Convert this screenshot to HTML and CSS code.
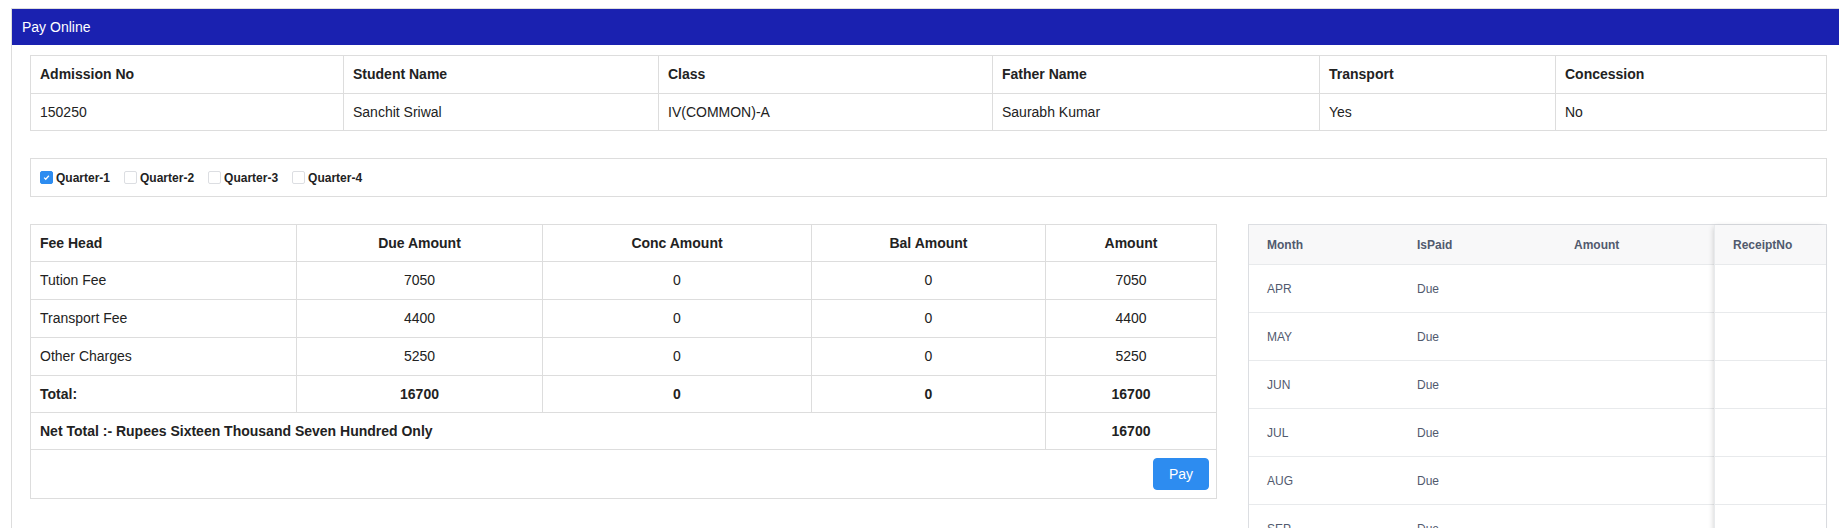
FILE: index.html
```html
<!DOCTYPE html>
<html lang="en">
<head>
<meta charset="utf-8">
<title>Pay Online</title>
<link rel="stylesheet" href="styles.css">
</head>
<body>
<div class="panel">
  <div class="panel-heading">Pay Online</div>
  <div class="panel-body">
    <table class="grid info">
      <colgroup>
        <col class="c313"><col class="c315"><col class="c334"><col class="c327"><col class="c236"><col>
      </colgroup>
      <thead>
        <tr><th>Admission No</th><th>Student Name</th><th>Class</th><th>Father Name</th><th>Transport</th><th>Concession</th></tr>
      </thead>
      <tbody>
        <tr><td>150250</td><td>Sanchit Sriwal</td><td>IV(COMMON)-A</td><td>Saurabh Kumar</td><td>Yes</td><td>No</td></tr>
      </tbody>
    </table>

    <div class="quarters">
      <label class="chk"><span class="box checked"><svg viewBox="0 0 14 14" width="13" height="13"><polyline points="4,7.2 6,9.2 10,4.8" fill="none" stroke="#fff" stroke-width="1.6"/></svg></span><span class="lbl">Quarter-1</span></label>
      <label class="chk"><span class="box"></span><span class="lbl">Quarter-2</span></label>
      <label class="chk"><span class="box"></span><span class="lbl">Quarter-3</span></label>
      <label class="chk"><span class="box"></span><span class="lbl">Quarter-4</span></label>
    </div>

    <div class="split">
      <table class="grid fees">
        <colgroup>
          <col class="f266"><col class="f246"><col class="f269"><col class="f234"><col>
        </colgroup>
        <thead>
          <tr><th class="l">Fee Head</th><th>Due Amount</th><th>Conc Amount</th><th>Bal Amount</th><th>Amount</th></tr>
        </thead>
        <tbody>
          <tr><td class="l">Tution Fee</td><td>7050</td><td>0</td><td>0</td><td>7050</td></tr>
          <tr><td class="l">Transport Fee</td><td>4400</td><td>0</td><td>0</td><td>4400</td></tr>
          <tr><td class="l">Other Charges</td><td>5250</td><td>0</td><td>0</td><td>5250</td></tr>
          <tr class="b"><td class="l">Total:</td><td>16700</td><td>0</td><td>0</td><td>16700</td></tr>
          <tr class="b"><td class="l" colspan="4">Net Total :- Rupees Sixteen Thousand Seven Hundred Only</td><td>16700</td></tr>
          <tr><td class="foot" colspan="5"><button class="btn-pay" type="button">Pay</button></td></tr>
        </tbody>
      </table>

      <div class="mtable">
        <div class="mt-main">
          <div class="mt-row mt-head"><div class="mc w150">Month</div><div class="mc w157">IsPaid</div><div class="mc grow">Amount</div></div>
          <div class="mt-row"><div class="mc w150">APR</div><div class="mc w157">Due</div><div class="mc grow"></div></div>
          <div class="mt-row"><div class="mc w150">MAY</div><div class="mc w157">Due</div><div class="mc grow"></div></div>
          <div class="mt-row"><div class="mc w150">JUN</div><div class="mc w157">Due</div><div class="mc grow"></div></div>
          <div class="mt-row"><div class="mc w150">JUL</div><div class="mc w157">Due</div><div class="mc grow"></div></div>
          <div class="mt-row"><div class="mc w150">AUG</div><div class="mc w157">Due</div><div class="mc grow"></div></div>
          <div class="mt-row"><div class="mc w150">SEP</div><div class="mc w157">Due</div><div class="mc grow"></div></div>
          <div class="mt-row"><div class="mc w150">OCT</div><div class="mc w157">Due</div><div class="mc grow"></div></div>
        </div>
        <div class="mt-fixed">
          <div class="mt-row mt-head"><div class="mc grow">ReceiptNo</div></div>
          <div class="mt-row"><div class="mc grow"></div></div>
          <div class="mt-row"><div class="mc grow"></div></div>
          <div class="mt-row"><div class="mc grow"></div></div>
          <div class="mt-row"><div class="mc grow"></div></div>
          <div class="mt-row"><div class="mc grow"></div></div>
          <div class="mt-row"><div class="mc grow"></div></div>
          <div class="mt-row"><div class="mc grow"></div></div>
        </div>
      </div>
    </div>
  </div>
</div>
</body>
</html>
```

FILE: styles.css
```css
html, body {
  margin: 0;
  padding: 0;
  overflow: hidden;
  background: #fff;
}
body {
  font-family: "Liberation Sans", Arial, Helvetica, sans-serif;
  font-size: 14px;
  color: #222;
}
.panel {
  margin: 8px 0 0 11px;
  border-top: 1px solid #ddd;
  border-left: 1px solid #ddd;
  min-height: 600px;
}
.panel-heading {
  height: 36px;
  line-height: 36px;
  padding-left: 10px;
  background: #1a21b0;
  color: #fff;
  font-size: 14px;
}
.panel-body {
  padding: 10px 12px 0 18px;
}
.grid {
  width: 100%;
  border-collapse: collapse;
  table-layout: fixed;
}
.grid th, .grid td {
  border: 1px solid #ddd;
  padding: 8px 9px;
  text-align: left;
  vertical-align: middle;
  line-height: 20px;
  white-space: nowrap;
}
.grid th { font-weight: bold; }
.info th { line-height: 21px; }
.c313 { width: 313px; }
.c315 { width: 315px; }
.c334 { width: 334px; }
.c327 { width: 327px; }
.c236 { width: 236px; }

.quarters {
  margin-top: 27px;
  border: 1px solid #ddd;
  height: 37px;
  padding-left: 9px;
  display: flex;
  align-items: center;
  gap: 14px;
}
.chk {
  display: flex;
  align-items: center;
  gap: 3px;
  font-size: 12px;
  font-weight: bold;
  color: #222;
}
.box {
  width: 13px;
  height: 13px;
  box-sizing: border-box;
  border: 1px solid #dcdee2;
  border-radius: 2px;
  background: #fff;
  display: flex;
  align-items: center;
  justify-content: center;
}
.box.checked {
  background: #2d8cf0;
  border-color: #2d8cf0;
}
.box svg { display: block; }

.split {
  margin-top: 27px;
  display: grid;
  grid-template-columns: 1187px 1fr;
  column-gap: 31px;
  align-items: start;
}
.fees th, .fees td { text-align: center; }
.fees td { line-height: 21px; }
.fees .b td { line-height: 20px; }
.fees .l { text-align: left; }
.fees .b td { font-weight: bold; }
.f266 { width: 266px; }
.f246 { width: 246px; }
.f269 { width: 269px; }
.f234 { width: 234px; }
.fees td.foot {
  text-align: right;
  padding: 8px 7px 8px 8px;
  line-height: 0;
}
.btn-pay {
  height: 32px;
  padding: 0 15px;
  border: 1px solid #2d8cf0;
  border-radius: 4px;
  background: #2d8cf0;
  color: #fff;
  font-family: "Liberation Sans", Arial, sans-serif;
  font-size: 14px;
  line-height: 30px;
  cursor: pointer;
}

.mtable {
  display: flex;
  border: 1px solid #dcdee2;
  border-bottom: none;
  font-size: 12px;
  color: #515a6e;
}
.mt-main { flex: 1; }
.mt-fixed {
  width: 111px;
  border-left: 1px solid #e8eaec;
  box-shadow: -2px 0 6px -2px rgba(0, 0, 0, 0.2);
  background: #fff;
}
.mt-row {
  display: flex;
  height: 48px;
  border-bottom: 1px solid #e8eaec;
  box-sizing: border-box;
  align-items: center;
}
.mt-head {
  height: 40px;
  background: #f8f8f9;
  font-weight: bold;
}
.mc {
  padding: 0 18px;
  box-sizing: border-box;
  white-space: nowrap;
}
.w150 { width: 150px; }
.w157 { width: 157px; }
.grow { flex: 1; }
```
